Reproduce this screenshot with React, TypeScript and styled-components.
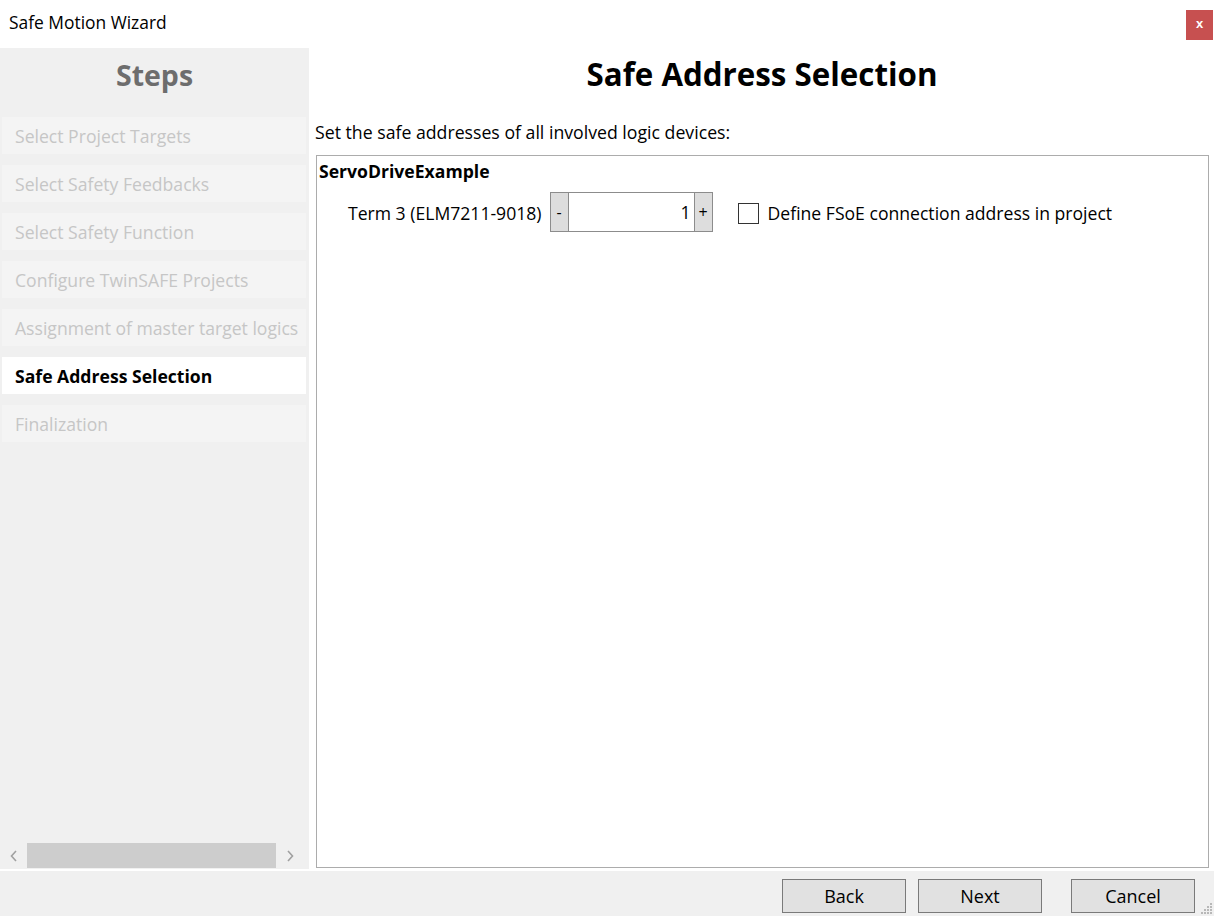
import React, { useState } from "react";
import styled, { createGlobalStyle } from "styled-components";

const GlobalStyle = createGlobalStyle`
  html, body {
    margin: 0;
    padding: 0;
    background: #ffffff;
  }
  body {
    font-family: "Open Sans", "Noto Sans", "Liberation Sans", sans-serif;
    color: #000;
  }
  * { box-sizing: border-box; }
`;

const Window = styled.div`
  width: 1214px;
  height: 916px;
  display: flex;
  flex-direction: column;
  background: #ffffff;
  overflow: hidden;
`;

const TitleBar = styled.div`
  height: 48px;
  flex: none;
  display: flex;
  justify-content: space-between;
  align-items: flex-start;
  padding: 0 1px 0 9px;
`;

const TitleText = styled.div`
  font-size: 17.4px;
  line-height: 22px;
  margin-top: 11px;
`;

const CloseButton = styled.button`
  margin-top: 10px;
  width: 27px;
  height: 30px;
  border: none;
  background: #c75050;
  color: #fff;
  font-family: "Liberation Sans", sans-serif;
  font-weight: bold;
  font-size: 13px;
  padding: 0 0 3px;
  display: flex;
  align-items: center;
  justify-content: center;
`;

const Body = styled.div`
  flex: 1;
  display: flex;
  min-height: 0;
`;

const Sidebar = styled.div`
  width: 309px;
  flex: none;
  background: #f0f0f0;
  display: flex;
  flex-direction: column;
`;

const SidebarHeading = styled.div`
  height: 69px;
  display: flex;
  align-items: center;
  justify-content: center;
  padding-bottom: 16px;
  font-size: 28.5px;
  font-weight: 700;
  color: #6d6d6d;
`;

const StepList = styled.div`
  flex: 1;
  display: flex;
  flex-direction: column;
  gap: 11px;
  padding: 0 3px 0 2px;
`;

const StepItem = styled.div<{ $active?: boolean }>`
  height: 37px;
  display: flex;
  align-items: center;
  padding-left: 13px;
  white-space: nowrap;
  overflow: hidden;
  font-size: 17.6px;
  background: ${(p) => (p.$active ? "#ffffff" : "#f4f4f4")};
  color: ${(p) => (p.$active ? "#000000" : "#c6c6c6")};
  font-weight: ${(p) => (p.$active ? 700 : 400)};
`;

const ScrollBar = styled.div`
  height: 26px;
  display: flex;
  align-items: stretch;
  margin-bottom: 1px;
`;

const ScrollArrow = styled.div`
  width: 27px;
  display: flex;
  align-items: center;
  justify-content: center;
  color: #a0a0a0;
  padding-top: 2px;
`;

const ScrollThumb = styled.div`
  width: 249px;
  background: #cdcdcd;
  margin-top: 1px;
`;

const Main = styled.div`
  flex: 1;
  display: flex;
  flex-direction: column;
  padding: 0 5px 1px 6px;
`;

const PageHeading = styled.h1`
  margin: 0;
  height: 65px;
  display: flex;
  align-items: center;
  justify-content: center;
  padding-bottom: 14px;
  font-size: 31.3px;
  font-weight: 700;
`;

const Intro = styled.div`
  height: 42px;
  display: flex;
  align-items: center;
  font-size: 17.7px;
  padding-bottom: 5px;
`;

const ContentBox = styled.div`
  flex: 1;
  margin-left: 1px;
  border: 1px solid #acacac;
  background: #ffffff;
  padding: 4px 2px;
`;

const GroupTitle = styled.div`
  font-size: 17.6px;
  font-weight: 700;
  line-height: 22px;
`;

const DeviceRow = styled.div`
  display: flex;
  align-items: center;
  margin-top: 10px;
  padding-left: 29px;
`;

const DeviceLabel = styled.span`
  font-size: 17.6px;
  margin-right: 8px;
  padding-top: 2px;
`;

const Spinner = styled.div`
  display: flex;
  height: 40px;
  border: 1px solid #8c8c8c;
`;

const SpinButton = styled.button`
  width: 17px;
  border: none;
  background: #dddddd;
  font-family: inherit;
  font-size: 16px;
  padding: 0;
  color: #000;
`;

const SpinInput = styled.input`
  width: 127px;
  border: none;
  border-left: 1px solid #8c8c8c;
  border-right: 1px solid #8c8c8c;
  font-family: inherit;
  font-size: 17.6px;
  text-align: right;
  padding: 0 3px 0 0;
  outline: none;
`;

const CheckLabel = styled.label`
  display: flex;
  align-items: center;
  margin-left: 25px;
  font-size: 17.6px;
  gap: 9px;
  padding-top: 2px;
`;

const CheckBox = styled.span`
  width: 21px;
  height: 21px;
  border: 1px solid #333;
  background: #fff;
`;

const Footer = styled.div`
  height: 47px;
  flex: none;
  background: #f0f0f0;
  border-top: 2px solid #ffffff;
  display: flex;
  align-items: flex-start;
  justify-content: flex-end;
  padding: 8px 19px 0 0;
  position: relative;
`;

const FooterButton = styled.button<{ $gap?: number }>`
  width: 124px;
  height: 34px;
  margin-left: ${(p) => p.$gap ?? 12}px;
  background: #e1e1e1;
  border: 1px solid #7a7a7a;
  font-family: inherit;
  font-size: 18px;
  color: #000;
  padding: 0;
`;

const Grip = styled.svg`
  position: absolute;
  right: 1px;
  bottom: 1px;
`;

const steps = [
  "Select Project Targets",
  "Select Safety Feedbacks",
  "Select Safety Function",
  "Configure TwinSAFE Projects",
  "Assignment of master target logics",
  "Safe Address Selection",
  "Finalization",
];

const App = () => {
  const [address, setAddress] = useState(1);

  return (
    <>
      <GlobalStyle />
      <Window>
        <TitleBar>
          <TitleText>Safe Motion Wizard</TitleText>
          <CloseButton>x</CloseButton>
        </TitleBar>
        <Body>
          <Sidebar>
            <SidebarHeading>Steps</SidebarHeading>
            <StepList>
              {steps.map((s) => (
                <StepItem key={s} $active={s === "Safe Address Selection"}>
                  {s}
                </StepItem>
              ))}
            </StepList>
            <ScrollBar>
              <ScrollArrow>
                <svg width="8" height="12" viewBox="0 0 8 12">
                  <path d="M6 1 L1.5 6 L6 11" stroke="#a0a0a0" strokeWidth="1.6" fill="none" />
                </svg>
              </ScrollArrow>
              <ScrollThumb />
              <ScrollArrow>
                <svg width="8" height="12" viewBox="0 0 8 12">
                  <path d="M2 1 L6.5 6 L2 11" stroke="#a0a0a0" strokeWidth="1.6" fill="none" />
                </svg>
              </ScrollArrow>
            </ScrollBar>
          </Sidebar>
          <Main>
            <PageHeading>Safe Address Selection</PageHeading>
            <Intro>Set the safe addresses of all involved logic devices:</Intro>
            <ContentBox>
              <GroupTitle>ServoDriveExample</GroupTitle>
              <DeviceRow>
                <DeviceLabel>Term 3 (ELM7211-9018)</DeviceLabel>
                <Spinner>
                  <SpinButton onClick={() => setAddress((a) => a - 1)}>-</SpinButton>
                  <SpinInput
                    value={address}
                    onChange={(e) => setAddress(Number(e.target.value))}
                  />
                  <SpinButton onClick={() => setAddress((a) => a + 1)}>+</SpinButton>
                </Spinner>
                <CheckLabel>
                  <CheckBox />
                  Define FSoE connection address in project
                </CheckLabel>
              </DeviceRow>
            </ContentBox>
          </Main>
        </Body>
        <Footer>
          <FooterButton $gap={0}>Back</FooterButton>
          <FooterButton>Next</FooterButton>
          <FooterButton $gap={29}>Cancel</FooterButton>
          <Grip width="14" height="14" viewBox="0 0 14 14">
            {[
              [11, 2],
              [8, 5],
              [11, 5],
              [5, 8],
              [8, 8],
              [11, 8],
              [2, 11],
              [5, 11],
              [8, 11],
              [11, 11],
            ].map(([x, y]) => (
              <rect key={`${x}-${y}`} x={x} y={y} width="2" height="2" fill="#b8b8b8" />
            ))}
          </Grip>
        </Footer>
      </Window>
    </>
  );
};

export default App;
